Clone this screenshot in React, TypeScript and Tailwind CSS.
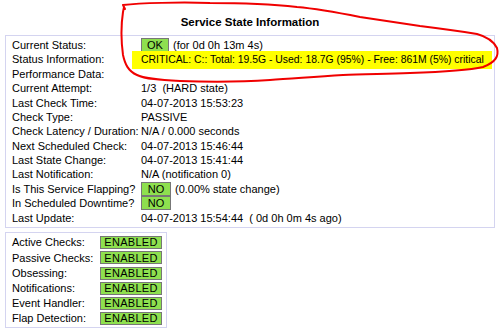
import React from 'react';

const rows: { label: string; value: React.ReactNode }[] = [
  {
    label: 'Current Status:',
    value: (
      <>
        <span className="inline-flex h-[14px] w-[28px] items-center justify-center border border-[#777] bg-[#8ee04f]">OK</span>
        <span className="ml-[4px]">(for 0d 0h 13m 4s)</span>
      </>
    ),
  },
  {
    label: 'Status Information:',
    value: (
      <span className="-ml-[9px] inline-flex h-[18px] w-[360px] items-center bg-[#ffff00] pl-[9px] text-[10.4px]">
        CRITICAL: C:: Total: 19.5G - Used: 18.7G (95%) - Free: 861M (5%) critical
      </span>
    ),
  },
  { label: 'Performance Data:', value: '' },
  { label: 'Current Attempt:', value: '1/3  (HARD state)' },
  { label: 'Last Check Time:', value: '04-07-2013 15:53:23' },
  { label: 'Check Type:', value: 'PASSIVE' },
  { label: 'Check Latency / Duration:', value: 'N/A / 0.000 seconds' },
  { label: 'Next Scheduled Check:', value: '04-07-2013 15:46:44' },
  { label: 'Last State Change:', value: '04-07-2013 15:41:44' },
  { label: 'Last Notification:', value: 'N/A (notification 0)' },
  {
    label: 'Is This Service Flapping?',
    value: (
      <>
        <span className="inline-flex h-[14px] w-[30px] items-center justify-center border border-[#777] bg-[#8ee04f]">NO</span>
        <span className="ml-[4px]">(0.00% state change)</span>
      </>
    ),
  },
  {
    label: 'In Scheduled Downtime?',
    value: (
      <span className="inline-flex h-[14px] w-[30px] items-center justify-center border border-[#777] bg-[#8ee04f]">NO</span>
    ),
  },
  { label: 'Last Update:', value: '04-07-2013 15:54:44  ( 0d 0h 0m 4s ago)' },
];

const checks = ['Active Checks:', 'Passive Checks:', 'Obsessing:', 'Notifications:', 'Event Handler:', 'Flap Detection:'];

export default function App() {
  return (
    <div className="relative h-[329px] w-[500px] overflow-hidden bg-white font-['Liberation_Sans',Arial,sans-serif] text-[11px] text-black">
      <div className="ml-[5px] flex h-[35px] w-[490px] items-end justify-center pb-[6px]">
        <h1 className="text-[11.5px] font-bold leading-[14px]">Service State Information</h1>
      </div>

      <div className="ml-[5px] w-[490px] border border-[#d4d4f0] pb-[2px] pl-[6px] pt-[2px]">
        {rows.map((r) => (
          <div key={r.label} className="flex h-[14.4px] items-center whitespace-pre">
            <div className="w-[129px] shrink-0">{r.label}</div>
            <div className="flex items-center">{r.value}</div>
          </div>
        ))}
      </div>

      <div className="ml-[5px] mt-[4px] w-[162px] border border-[#d4d4f0] pb-[1px] pl-[6px] pt-[2px]">
        {checks.map((c) => (
          <div key={c} className="flex h-[15.2px] items-center">
            <div className="w-[88px] shrink-0">{c}</div>
            <span className="inline-flex h-[13px] w-[62px] items-center justify-center border border-[#777] bg-[#8ee04f] tracking-[0.3px]">
              ENABLED
            </span>
          </div>
        ))}
      </div>

      <svg className="pointer-events-none absolute inset-0" width="500" height="329" viewBox="0 0 500 329">
        <path
          d="M125 9 L123 5 C140 3 180 2 210 3 C240 3 270 4 297 7 C320 9 340 13 360 17 C380 20 400 23 420 26 C445 29 465 32 477 34 C488 37 494 42 497 48 C499 56 496 62 483 67 C470 70 440 72 410 73 C380 74 360 74 343 75 C310 77 290 79 270 80 C240 82 210 82 180 81 C160 80 145 79 137 75 C128 71 125 64 123 55 C121 40 121 25 123 12 L124 7"
          fill="none"
          stroke="#f00000"
          strokeWidth="2"
          strokeLinecap="round"
          strokeLinejoin="round"
        />
      </svg>
    </div>
  );
}
